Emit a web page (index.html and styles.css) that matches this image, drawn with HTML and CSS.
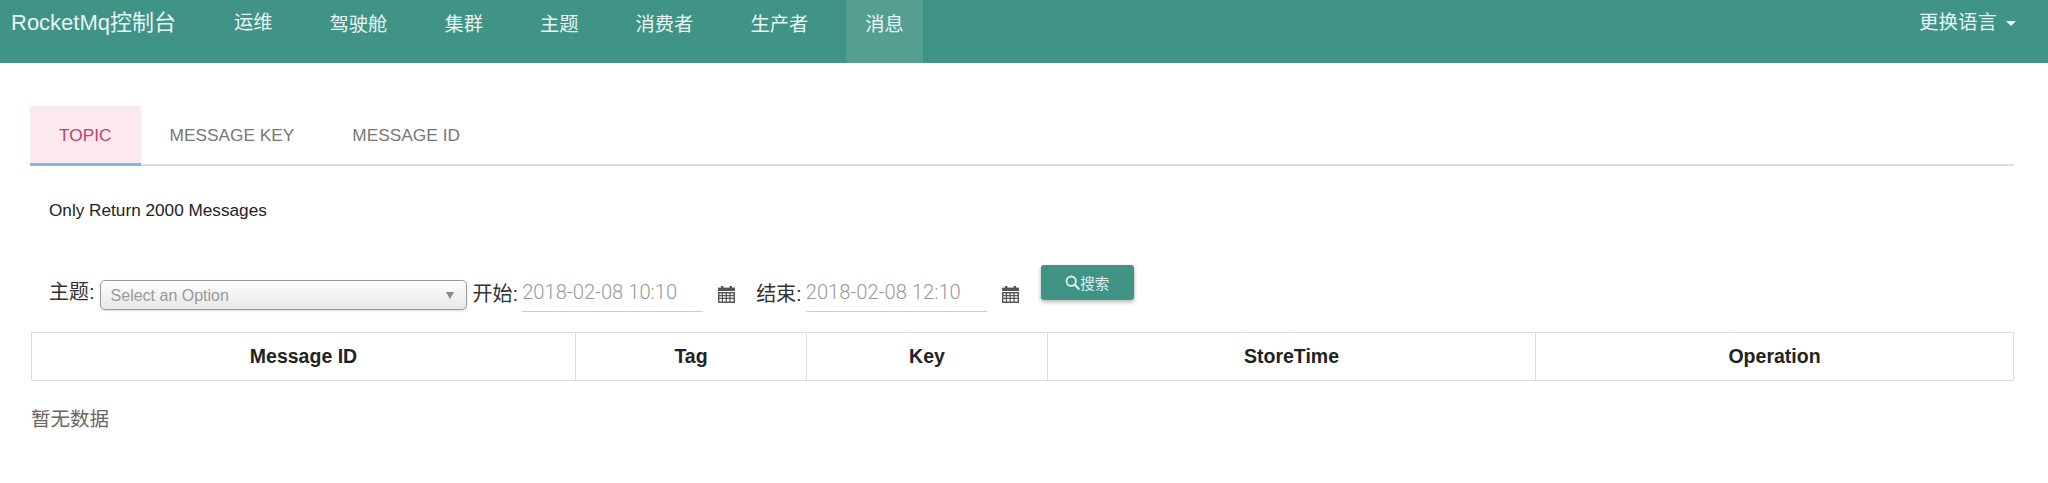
FILE: index.html
```html
<!DOCTYPE html>
<html lang="en">
<head>
    <meta charset="UTF-8">
    <meta name="viewport" content="width=device-width, initial-scale=1.0">
    <title>RocketMq控制台</title>
    <link rel="stylesheet" href="styles.css">
</head>
<body>
    <header class="navbar">
        <a class="brand">RocketMq控制台</a>
        <ul class="nav-list">
            <li class="nav-item nav-first">运维</li>
            <li class="nav-item">驾驶舱</li>
            <li class="nav-item">集群</li>
            <li class="nav-item">主题</li>
            <li class="nav-item">消费者</li>
            <li class="nav-item">生产者</li>
            <li class="nav-item active">消息</li>
        </ul>
        <div class="lang">更换语言<span class="caret"></span></div>
    </header>
    <main class="content">
        <div class="tabs">
            <div class="tab active">TOPIC</div>
            <div class="tab">MESSAGE KEY</div>
            <div class="tab">MESSAGE ID</div>
        </div>
        <p class="note">Only Return 2000 Messages</p>
        <form class="search-form">
            <label class="field-label">主题:</label>
            <div class="select-box">
                <span>Select an Option</span>
                <span class="select-arrow"></span>
            </div>
            <label class="field-label label-start">开始:</label>
            <div class="date-input">2018-02-08 10:10</div>
            <svg class="calendar" viewBox="0 0 17 17">
                <use href="#cal"></use>
            </svg>
            <label class="field-label label-end">结束:</label>
            <div class="date-input">2018-02-08 12:10</div>
            <svg class="calendar" viewBox="0 0 17 17">
                <use href="#cal"></use>
            </svg>
            <button type="button" class="search-btn">
                <svg class="search-icon" viewBox="0 0 16 16">
                    <circle cx="6.6" cy="6.6" r="5" fill="none" stroke="currentColor" stroke-width="2"></circle>
                    <path d="M10.4 10.4 L14.6 14.6" stroke="currentColor" stroke-width="2.4" stroke-linecap="round"></path>
                </svg>搜索
            </button>
        </form>
        <table class="msg-table">
            <colgroup>
                <col class="col-id">
                <col class="col-tag">
                <col class="col-key">
                <col class="col-time">
                <col>
            </colgroup>
            <thead>
                <tr>
                    <th>Message ID</th>
                    <th>Tag</th>
                    <th>Key</th>
                    <th>StoreTime</th>
                    <th>Operation</th>
                </tr>
            </thead>
        </table>
        <p class="empty">暂无数据</p>
    </main>
    <svg class="svg-defs" width="0" height="0">
        <defs>
            <g id="cal" fill="#555">
                <rect x="3" y="0" width="2.4" height="3"></rect>
                <rect x="11.6" y="0" width="2.4" height="3"></rect>
                <rect x="0" y="1.6" width="17" height="3.4"></rect>
                <path d="M0 6h17v11H0z M1.4 7.4v1.6h2.4V7.4z M5 7.4v1.6h2.6V7.4z M8.8 7.4v1.6h2.6V7.4z M12.6 7.4v1.6h3V7.4z M1.4 10.2v1.6h2.4v-1.6z M5 10.2v1.6h2.6v-1.6z M8.8 10.2v1.6h2.6v-1.6z M12.6 10.2v1.6h3v-1.6z M1.4 13v2.4h2.4V13z M5 13v2.4h2.6V13z M8.8 13v2.4h2.6V13z M12.6 13v2.4h3V13z" fill-rule="evenodd"></path>
            </g>
        </defs>
    </svg>
</body>
</html>
```

FILE: styles.css
```css
body {
    margin: 0;
    padding: 0;
    background: #fff;
    color: #333;
    font-family: "Liberation Sans", "Noto Sans CJK SC", sans-serif;
}

.navbar {
    display: flex;
    height: 63px;
    background: #3f9485;
    color: #e9f5f2;
}
.brand {
    width: 215px;
    padding: 8px 0 0 11px;
    box-sizing: border-box;
    font-size: 22px;
    line-height: 30px;
}
.nav-list {
    display: flex;
    gap: 19px;
    margin: 0;
    padding: 0;
    list-style: none;
}
.nav-item {
    padding: 10px 19px 0;
    font-size: 19.3px;
    line-height: 30px;
}
.nav-first {
    padding-top: 8px;
}
.nav-item.active {
    background: #549f92;
}
.lang {
    margin-left: auto;
    padding: 7px 32px 0 0;
    font-size: 19.5px;
    line-height: 30px;
}
.caret {
    display: inline-block;
    margin-left: 9px;
    vertical-align: middle;
    border-top: 5px solid #e9f5f2;
    border-left: 5px solid transparent;
    border-right: 5px solid transparent;
}

.content {
    padding: 43px 34px 0 31px;
}
.tabs {
    display: flex;
    height: 58px;
    margin-left: -1px;
    border-bottom: 2px solid #ddd;
}
.tab {
    height: 60px;
    padding: 0 29px;
    box-sizing: border-box;
    color: #777;
    font-size: 17.3px;
    line-height: 58px;
}
.tab.active {
    background: #fbe9ee;
    border-bottom: 3px solid #7fb8e0;
    color: #c2406a;
}
.note {
    margin: 33px 0 0 18px;
    color: #222;
    font-size: 17.2px;
    line-height: 22px;
}

.search-form {
    display: flex;
    align-items: flex-start;
    height: 67px;
    margin: 44px 0 0 18px;
}
.field-label {
    margin-top: 14px;
    color: #333;
    font-size: 20px;
    line-height: 26px;
}
.select-box {
    display: flex;
    align-items: center;
    justify-content: space-between;
    width: 367px;
    height: 30px;
    margin: 15px 0 0 5px;
    padding: 1px 12px 0 10px;
    box-sizing: border-box;
    background: linear-gradient(#fff, #f2f2f2 50%, #e8e8e8);
    border: 1px solid #999;
    border-radius: 5px;
    box-shadow: 0 1px 2px rgba(0,0,0,0.15);
    color: #999;
    font-size: 16px;
}
.select-arrow {
    border-top: 7px solid #888;
    border-left: 4px solid transparent;
    border-right: 4px solid transparent;
}
.label-start {
    margin-left: 6px;
    margin-top: 16px;
}
.label-end {
    margin-left: 21px;
    margin-top: 16px;
}
.date-input {
    width: 181px;
    height: 47px;
    margin: 0 0 0 4px;
    padding-top: 15px;
    box-sizing: border-box;
    border-bottom: 1px solid #ccc;
    color: #999;
    font-family: Roboto, "Liberation Sans", sans-serif;
    font-size: 20.2px;
    font-weight: 300;
    line-height: 25px;
}
.calendar {
    width: 17px;
    height: 17px;
    margin: 21px 0 0 15px;
}
.search-btn {
    display: flex;
    align-items: center;
    justify-content: center;
    width: 93px;
    height: 35px;
    margin-left: 22px;
    padding: 0;
    background: #3f9485;
    border: none;
    border-radius: 3px;
    box-shadow: 0 2px 4px rgba(0,0,0,0.3);
    color: #dff1ed;
    font-family: "Liberation Sans", "Noto Sans CJK SC", sans-serif;
    font-size: 14.5px;
}
.search-icon {
    width: 15px;
    height: 15px;
}

.msg-table {
    width: 100%;
    table-layout: fixed;
    border-collapse: collapse;
}
.col-id { width: 544px; }
.col-tag { width: 231px; }
.col-key { width: 241px; }
.col-time { width: 488px; }
.msg-table th {
    height: 47px;
    padding: 0;
    border: 1.5px solid #ddd;
    color: #222;
    font-size: 19.5px;
    font-weight: bold;
    text-align: center;
}
.empty {
    margin: 25px 0 0;
    color: #666;
    font-size: 19.5px;
    line-height: 26px;
}
.svg-defs {
    position: absolute;
}
```
